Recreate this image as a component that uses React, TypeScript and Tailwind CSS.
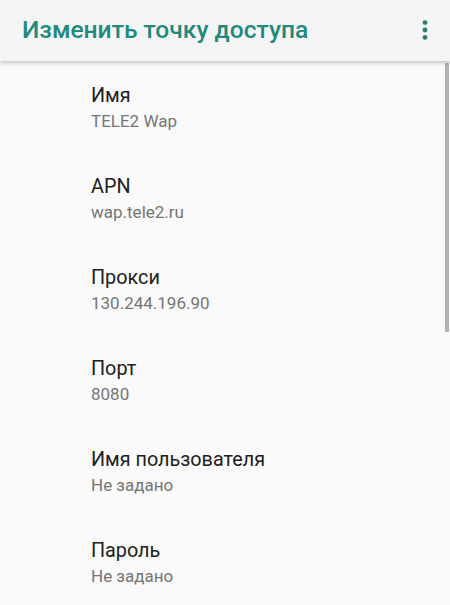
import React from "react";

const fields = [
  { label: "Имя", value: "TELE2 Wap" },
  { label: "APN", value: "wap.tele2.ru" },
  { label: "Прокси", value: "130.244.196.90" },
  { label: "Порт", value: "8080" },
  { label: "Имя пользователя", value: "Не задано" },
  { label: "Пароль", value: "Не задано" },
];

export default function App() {
  return (
    <div
      className="relative h-[605px] w-[450px] overflow-hidden bg-[#fafafa]"
      style={{ fontFamily: "Roboto, 'Noto Sans', sans-serif" }}
    >
      <header className="relative z-10 flex h-[61px] items-center justify-between bg-[#f5f5f5] pl-[22px] pr-[22px] shadow-[0_2px_4px_rgba(0,0,0,0.22)]">
        <h1 className="text-[24.6px] font-medium leading-none text-[#1f8a7d]">Изменить точку доступа</h1>
        <svg width="6" height="20" viewBox="0 0 6 20" className="mt-[-2px]">
          <circle cx="3" cy="2.6" r="2.4" fill="#2b7c72" />
          <circle cx="3" cy="10" r="2.4" fill="#2b7c72" />
          <circle cx="3" cy="17.4" r="2.4" fill="#2b7c72" />
        </svg>
      </header>

      <ul className="flex flex-col">
        {fields.map((f) => (
          <li key={f.label} className="flex h-[91px] flex-col pl-[91px] pt-[21px]">
            <span className="text-[19.8px] leading-[27px] text-[#202020]">{f.label}</span>
            <span className="mt-[1px] text-[17px] leading-[22px] text-[#757575]">{f.value}</span>
          </li>
        ))}
      </ul>

      <div className="absolute right-[1px] top-[63px] h-[269px] w-[4px] bg-[#b3b3b3]" />
    </div>
  );
}
